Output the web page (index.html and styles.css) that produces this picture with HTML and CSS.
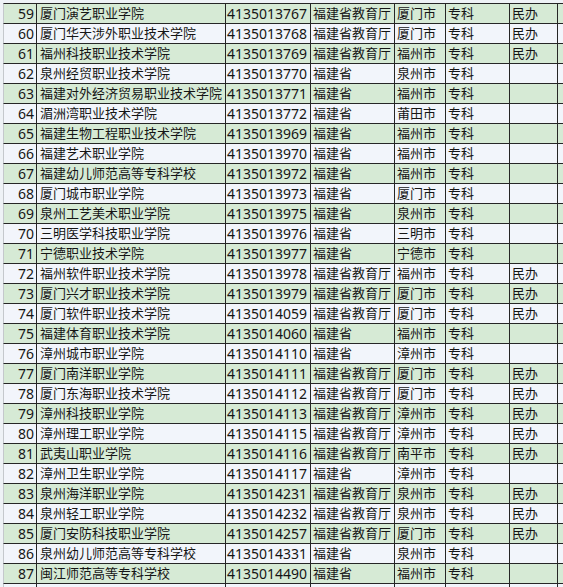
FILE: index.html
```html
<!DOCTYPE html>
<html lang="zh-CN">
<head>
<meta charset="utf-8">
<title>福建省高校名单</title>
<link rel="stylesheet" href="styles.css">
</head>
<body>
<table class="sheet">
<tbody>
<tr><td class="c1 num">59</td><td class="c2">厦门演艺职业学院</td><td class="c3 num">4135013767</td><td class="c4">福建省教育厅</td><td class="c5">厦门市</td><td class="c6">专科</td><td class="c7">民办</td><td class="c8"></td></tr>
<tr><td class="c1 num">60</td><td class="c2">厦门华天涉外职业技术学院</td><td class="c3 num">4135013768</td><td class="c4">福建省教育厅</td><td class="c5">厦门市</td><td class="c6">专科</td><td class="c7">民办</td><td class="c8"></td></tr>
<tr><td class="c1 num">61</td><td class="c2">福州科技职业技术学院</td><td class="c3 num">4135013769</td><td class="c4">福建省教育厅</td><td class="c5">福州市</td><td class="c6">专科</td><td class="c7">民办</td><td class="c8"></td></tr>
<tr><td class="c1 num">62</td><td class="c2">泉州经贸职业技术学院</td><td class="c3 num">4135013770</td><td class="c4">福建省</td><td class="c5">泉州市</td><td class="c6">专科</td><td class="c7"></td><td class="c8"></td></tr>
<tr><td class="c1 num">63</td><td class="c2">福建对外经济贸易职业技术学院</td><td class="c3 num">4135013771</td><td class="c4">福建省</td><td class="c5">福州市</td><td class="c6">专科</td><td class="c7"></td><td class="c8"></td></tr>
<tr><td class="c1 num">64</td><td class="c2">湄洲湾职业技术学院</td><td class="c3 num">4135013772</td><td class="c4">福建省</td><td class="c5">莆田市</td><td class="c6">专科</td><td class="c7"></td><td class="c8"></td></tr>
<tr><td class="c1 num">65</td><td class="c2">福建生物工程职业技术学院</td><td class="c3 num">4135013969</td><td class="c4">福建省</td><td class="c5">福州市</td><td class="c6">专科</td><td class="c7"></td><td class="c8"></td></tr>
<tr><td class="c1 num">66</td><td class="c2">福建艺术职业学院</td><td class="c3 num">4135013970</td><td class="c4">福建省</td><td class="c5">福州市</td><td class="c6">专科</td><td class="c7"></td><td class="c8"></td></tr>
<tr><td class="c1 num">67</td><td class="c2">福建幼儿师范高等专科学校</td><td class="c3 num">4135013972</td><td class="c4">福建省</td><td class="c5">福州市</td><td class="c6">专科</td><td class="c7"></td><td class="c8"></td></tr>
<tr><td class="c1 num">68</td><td class="c2">厦门城市职业学院</td><td class="c3 num">4135013973</td><td class="c4">福建省</td><td class="c5">厦门市</td><td class="c6">专科</td><td class="c7"></td><td class="c8"></td></tr>
<tr><td class="c1 num">69</td><td class="c2">泉州工艺美术职业学院</td><td class="c3 num">4135013975</td><td class="c4">福建省</td><td class="c5">泉州市</td><td class="c6">专科</td><td class="c7"></td><td class="c8"></td></tr>
<tr><td class="c1 num">70</td><td class="c2">三明医学科技职业学院</td><td class="c3 num">4135013976</td><td class="c4">福建省</td><td class="c5">三明市</td><td class="c6">专科</td><td class="c7"></td><td class="c8"></td></tr>
<tr><td class="c1 num">71</td><td class="c2">宁德职业技术学院</td><td class="c3 num">4135013977</td><td class="c4">福建省</td><td class="c5">宁德市</td><td class="c6">专科</td><td class="c7"></td><td class="c8"></td></tr>
<tr><td class="c1 num">72</td><td class="c2">福州软件职业技术学院</td><td class="c3 num">4135013978</td><td class="c4">福建省教育厅</td><td class="c5">福州市</td><td class="c6">专科</td><td class="c7">民办</td><td class="c8"></td></tr>
<tr><td class="c1 num">73</td><td class="c2">厦门兴才职业技术学院</td><td class="c3 num">4135013979</td><td class="c4">福建省教育厅</td><td class="c5">厦门市</td><td class="c6">专科</td><td class="c7">民办</td><td class="c8"></td></tr>
<tr><td class="c1 num">74</td><td class="c2">厦门软件职业技术学院</td><td class="c3 num">4135014059</td><td class="c4">福建省教育厅</td><td class="c5">厦门市</td><td class="c6">专科</td><td class="c7">民办</td><td class="c8"></td></tr>
<tr><td class="c1 num">75</td><td class="c2">福建体育职业技术学院</td><td class="c3 num">4135014060</td><td class="c4">福建省</td><td class="c5">福州市</td><td class="c6">专科</td><td class="c7"></td><td class="c8"></td></tr>
<tr><td class="c1 num">76</td><td class="c2">漳州城市职业学院</td><td class="c3 num">4135014110</td><td class="c4">福建省</td><td class="c5">漳州市</td><td class="c6">专科</td><td class="c7"></td><td class="c8"></td></tr>
<tr><td class="c1 num">77</td><td class="c2">厦门南洋职业学院</td><td class="c3 num">4135014111</td><td class="c4">福建省教育厅</td><td class="c5">厦门市</td><td class="c6">专科</td><td class="c7">民办</td><td class="c8"></td></tr>
<tr><td class="c1 num">78</td><td class="c2">厦门东海职业技术学院</td><td class="c3 num">4135014112</td><td class="c4">福建省教育厅</td><td class="c5">厦门市</td><td class="c6">专科</td><td class="c7">民办</td><td class="c8"></td></tr>
<tr><td class="c1 num">79</td><td class="c2">漳州科技职业学院</td><td class="c3 num">4135014113</td><td class="c4">福建省教育厅</td><td class="c5">漳州市</td><td class="c6">专科</td><td class="c7">民办</td><td class="c8"></td></tr>
<tr><td class="c1 num">80</td><td class="c2">漳州理工职业学院</td><td class="c3 num">4135014115</td><td class="c4">福建省教育厅</td><td class="c5">漳州市</td><td class="c6">专科</td><td class="c7">民办</td><td class="c8"></td></tr>
<tr><td class="c1 num">81</td><td class="c2">武夷山职业学院</td><td class="c3 num">4135014116</td><td class="c4">福建省教育厅</td><td class="c5">南平市</td><td class="c6">专科</td><td class="c7">民办</td><td class="c8"></td></tr>
<tr><td class="c1 num">82</td><td class="c2">漳州卫生职业学院</td><td class="c3 num">4135014117</td><td class="c4">福建省</td><td class="c5">漳州市</td><td class="c6">专科</td><td class="c7"></td><td class="c8"></td></tr>
<tr><td class="c1 num">83</td><td class="c2">泉州海洋职业学院</td><td class="c3 num">4135014231</td><td class="c4">福建省教育厅</td><td class="c5">泉州市</td><td class="c6">专科</td><td class="c7">民办</td><td class="c8"></td></tr>
<tr><td class="c1 num">84</td><td class="c2">泉州轻工职业学院</td><td class="c3 num">4135014232</td><td class="c4">福建省教育厅</td><td class="c5">泉州市</td><td class="c6">专科</td><td class="c7">民办</td><td class="c8"></td></tr>
<tr><td class="c1 num">85</td><td class="c2">厦门安防科技职业学院</td><td class="c3 num">4135014257</td><td class="c4">福建省教育厅</td><td class="c5">厦门市</td><td class="c6">专科</td><td class="c7">民办</td><td class="c8"></td></tr>
<tr><td class="c1 num">86</td><td class="c2">泉州幼儿师范高等专科学校</td><td class="c3 num">4135014331</td><td class="c4">福建省</td><td class="c5">泉州市</td><td class="c6">专科</td><td class="c7"></td><td class="c8"></td></tr>
<tr><td class="c1 num">87</td><td class="c2">闽江师范高等专科学校</td><td class="c3 num">4135014490</td><td class="c4">福建省</td><td class="c5">福州市</td><td class="c6">专科</td><td class="c7"></td><td class="c8"></td></tr>
<tr><td class="c1 num"></td><td class="c2"></td><td class="c3 num"></td><td class="c4"></td><td class="c5"></td><td class="c6"></td><td class="c7"></td><td class="c8"></td></tr>
</tbody>
</table>
</body>
</html>
```

FILE: styles.css
```css
html, body {
  margin: 0;
  padding: 0;
  background: #eef2f6;
  overflow: hidden;
  width: 563px;
  height: 587px;
}

.sheet {
  margin: 3px 0 0 3px;
  border-collapse: separate;
  border-spacing: 0;
  table-layout: fixed;
  width: 575px;
  font-family: "Noto Sans", "Noto Sans CJK SC", sans-serif;
  font-size: 13px;
  color: #151515;
}

.sheet td {
  box-sizing: border-box;
  height: 20px;
  padding: 0;
  line-height: 19px;
  border-right: 1px solid #262626;
  border-bottom: 1px solid #262626;
  white-space: nowrap;
  overflow: hidden;
  vertical-align: middle;
}

.sheet tr:first-child td {
  border-top: 1px solid #262626;
  height: 21px;
}

.sheet tr:nth-child(odd) td { background: #d6ead5; }
.sheet tr:nth-child(even) td { background: #f2f5fb; }

.sheet .num {
  font-size: 14px;
  letter-spacing: 0;
}

.c1 {
  width: 34px;
  text-align: right;
  padding-right: 2px !important;
  border-left: 1px solid #c4c8cc;
}
.c2 { width: 189px; padding-left: 3px !important; }
.c3 { width: 85px; padding-left: 1px !important; }
.c4 { width: 84px; padding-left: 2px !important; }
.c5 { width: 51px; padding-left: 2px !important; }
.c6 { width: 64px; padding-left: 2px !important; }
.c7 { width: 48px; padding-left: 2px !important; }
.c8 { width: 20px; border-right: none !important; }
```
